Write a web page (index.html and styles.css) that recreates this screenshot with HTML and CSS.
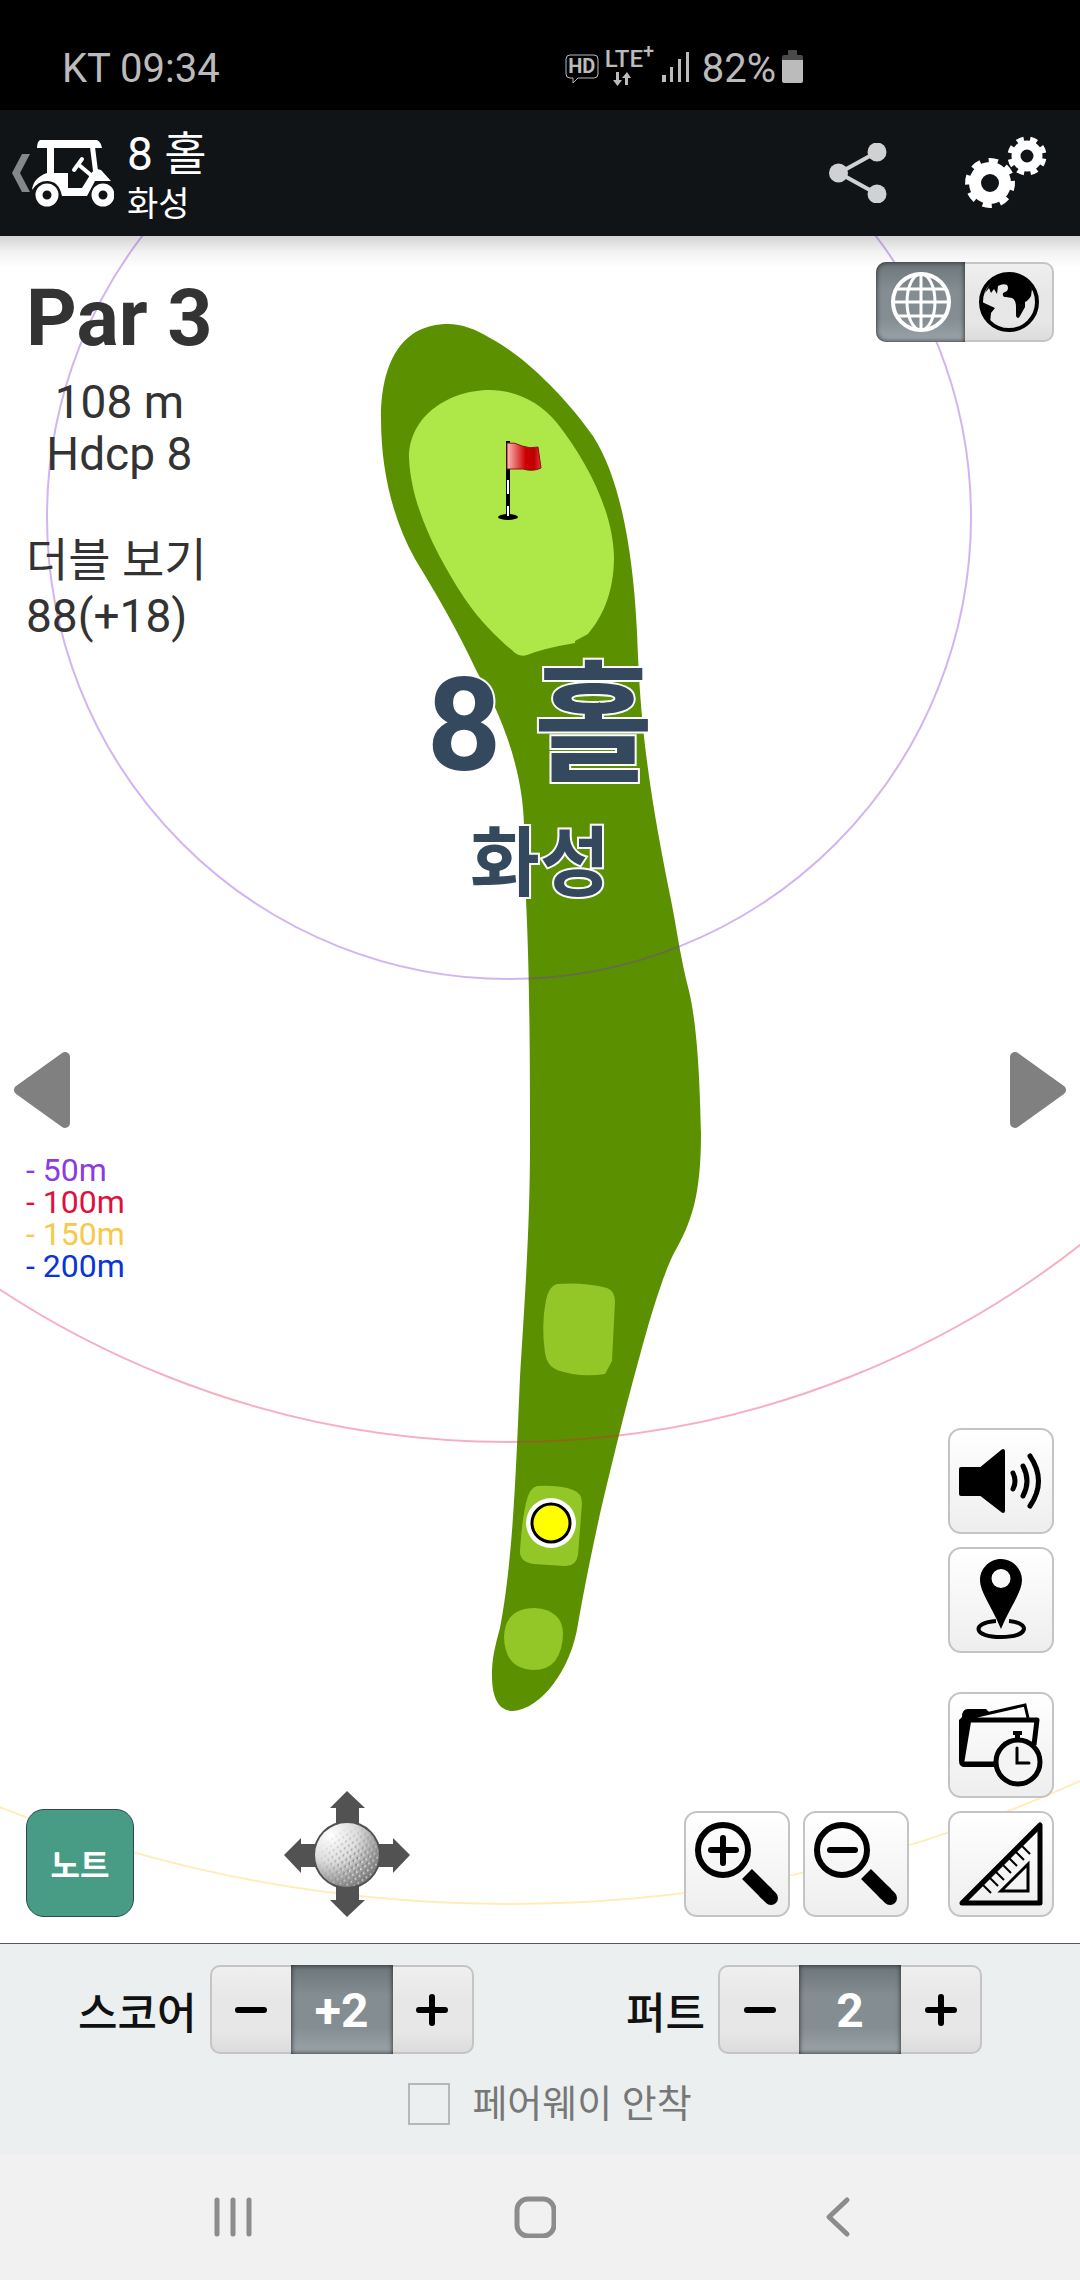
FILE: index.html
```html
<!DOCTYPE html>
<html lang="ko">
<head>
    <meta charset="UTF-8">
    <meta name="viewport" content="width=device-width">
    <title>8 홀 화성</title>
    <link rel="stylesheet" href="styles.css">
</head>

<body>

<div class="status">
  <span>KT 09:34</span>
  <div class="status-icons">
    <span class="hd">HD
      <svg class="hd-box" viewBox="0 0 34 30"><path d="M5 1H29Q33 1 33 5V20Q33 24 29 24H13L8 29V24H5Q1 24 1 20V5Q1 1 5 1Z"/></svg>
    </span>
    <span class="lte"><span>LTE<sup>+</sup></span>
      <svg width="20" height="14" viewBox="0 0 20 14"><path d="M4 0H7V8H10L5.500 14L1 8H4ZM13 13V6H10L15 0L19 6H16V13Z"/></svg>
    </span>
    <svg width="28" height="30" viewBox="0 0 28 30"><path d="M0 23h4v7H0zM8 15h3v15H8zM16 7h3v23h-3zM24 0h3v30h-3z"/></svg>
    <span class="percent">82%</span>
    <svg width="22" height="33" viewBox="0 0 22 33"><path fill="#4a4a4a" d="M6 1Q6 0 7 0H14Q15 0 15 1V5H19Q21 5 21 7V11H0V7Q0 5 2 5H6Z"/><path d="M0 10H21V31Q21 33 19 33H2Q0 33 0 31Z"/></svg>
  </div>
</div>

<header class="bar">
  <button class="back" aria-label="뒤로">
    <svg width="20" height="38" viewBox="0 0 20 38"><path fill="#85888b" d="M10 0H18L8 19L18 38H10L0 19Z"/></svg>
    <svg width="82" height="68" viewBox="0 0 82 68">
      <g fill="#fff">
        <path d="M8 1H65Q69 3 70 9H5Q5 3 8 1Z"/>
        <path d="M15 8H22V35H15ZM58 8H63L66 32H61Z"/>
        <path d="M0 51Q1 39 15 34H36V49H50L58 36Q60 32 65 30L69 31L79 42H63L55 57H30Q27 42 15 42Q6 42 0 51Z"/>
      </g>
      <path d="M50 20L42 31M47 26L60 37" stroke="#fff" stroke-width="4" stroke-linecap="round"/>
      <g fill="none" stroke="#fff" stroke-width="7"><circle cx="15" cy="56" r="8"/><circle cx="71" cy="56" r="8"/></g>
    </svg>
  </button>
  <h1 class="heading">8 홀<small>화성</small></h1>
  <button class="share" aria-label="공유">
    <svg width="58" height="60" viewBox="0 0 58 60"><path d="M48 9L10 30L48 51" fill="none" stroke="#d0d1d3" stroke-width="4"/><g fill="#d0d1d3"><circle cx="48" cy="9" r="9.500"/><circle cx="9.500" cy="30" r="9.500"/><circle cx="48" cy="51" r="9.500"/></g></svg>
  </button>
  <button class="gears" aria-label="설정">
    <svg width="84" height="74" viewBox="0 0 84 74">
      <g fill="none" stroke="#fff">
        <circle cx="26" cy="47" r="15" stroke-width="12"/>
        <circle cx="26" cy="47" r="22" stroke-width="6" stroke-dasharray="9 8.280" transform="rotate(-5 26 47)"/>
        <circle cx="63" cy="20" r="11" stroke-width="9"/>
        <circle cx="63" cy="20" r="17" stroke-width="5" stroke-dasharray="7 6.350" transform="rotate(9 63 20)"/>
      </g>
    </svg>
  </button>
</header>

<main class="map">
  <svg class="course" viewBox="0 236 1080 1707" preserveAspectRatio="xMidYMid slice">
    <path fill="#5b9100" d="M448 324C402 324 381 362 381 419C381 470 393 520 415 559C434 590 457 629 477 672C500 712 523 768 524 826C525 860 526 880 526 900C530 980 530 1080 530 1144C530 1230 524 1310 520 1377C516 1470 513 1560 500 1628C494 1650 492 1660 492 1676C492 1700 500 1711 513 1711C541 1709 571 1670 578 1624C584 1590 590 1560 598 1523C610 1470 628 1398 640 1355C650 1318 662 1278 673 1255C692 1222 701 1195 701 1133C700 1090 698 1025 688 987C681 960 676 925 671 900C655 820 642 750 638 656C636 590 628 490 593 436C570 403 528 358 490 338C475 329 462 324 448 324Z"/>
    <path fill="#aee848" d="M490 390C450 390 409 415 409 458C411 505 436 555 465 599C482 624 500 640 515 653Q520 657 527 655Q545 648 575 643L575 641L588 634C604 615 614 590 614 557C613 510 586 460 557 423C540 402 515 390 490 390Z"/>
    <path fill="#93c727" d="M557 1284Q585 1282 607 1288Q615 1291 615 1302L612 1361L605 1374Q580 1378 557 1370Q547 1366 545 1353Q541 1325 546 1300Q549 1286 557 1284Z"/>
    <path fill="#93c727" d="M537 1486Q560 1485 573 1490Q582 1493 582 1503L578 1555Q576 1567 564 1566L534 1564Q519 1562 520 1550Q522 1520 526 1503Q529 1488 537 1486Z"/>
    <path fill="#93c727" d="M504 1637Q505 1608 535 1608Q562 1610 563 1633Q563 1650 555 1661Q548 1670 533 1670Q505 1669 504 1637Z"/>
    <g fill="none" stroke-width="2" stroke-opacity=".35">
      <circle cx="509" cy="517" r="462" stroke="#7a2ad8"/>
      <circle cx="509" cy="517" r="925" stroke="#e6194b"/>
      <circle cx="509" cy="517" r="1387" stroke="#fc3"/>
    </g>
    <circle cx="551" cy="1523" r="25" fill="#fff"/>
    <circle cx="551" cy="1523" r="19" fill="#ff0" stroke="#000" stroke-width="3"/>
    <defs>
      <linearGradient id="red"><stop offset="0" stop-color="#fbb"/><stop offset=".55" stop-color="#c00"/><stop offset=".8" stop-color="#b00"/><stop offset="1" stop-color="#e33"/></linearGradient>
    </defs>
    <ellipse cx="508" cy="517" rx="10" ry="3"/>
    <path d="M508 441V517" stroke="#000" stroke-width="4"/>
    <path d="M508 480V494M508 506V516" stroke="#fff" stroke-width="2"/>
    <path fill="url(#red)" stroke="#811" d="M507 443Q515 442 522 446Q530 449 538 447L541 468Q533 472 523 469H507Z"/>
  </svg>

  <div class="info">
    <div class="par">
      <strong>Par 3</strong>
      <span>108 m</span>
      <span>Hdcp 8</span>
    </div>
    <p class="result">더블 보기<br>88(+18)</p>
  </div>

  <h2 class="hole">8 홀<small>화성</small></h2>

  <div class="views">
    <button class="dark" aria-label="지도">
      <svg width="62" height="62" viewBox="0 0 62 62" fill="none" stroke="#fff" stroke-width="2"><circle cx="31" cy="31" r="28" stroke-width="4"/><ellipse cx="31" cy="31" rx="14" ry="28" stroke-width="3"/><path stroke-width="3" d="M31 3V59M3 31H59M7 18H55M7 45H55"/></svg>
    </button>
    <button class="light" aria-label="위성">
      <svg width="62" height="62" viewBox="0 0 62 62"><circle cx="31" cy="31" r="28" fill="none" stroke="#000" stroke-width="4"/><path d="M7 22L11 17L13 22L16 18L19 23L20 15Q25 12 29 14Q31 17 29 20L25 22Q24 26 28 26L34 27Q38 29 38 36V45Q40 49 42 45L47 36V31Q50 30 53 25L54 18Q47 3 31 3Q14 4 7 22ZM4 31L17 37L13 42L12 52Q3 43 4 31Z"/></svg>
    </button>
  </div>

  <button class="prev" aria-label="이전 홀"><svg width="57" height="76" viewBox="0 0 57 76"><path d="M5 38L51 5V71Z"/></svg></button>
  <button class="next" aria-label="다음 홀"><svg width="57" height="76" viewBox="0 0 57 76"><path d="M52 38L6 5V71Z"/></svg></button>

  <div class="tools">
    <div class="side">
      <ul class="legend">
        <li class="m50">- 50m</li>
        <li class="m100">- 100m</li>
        <li class="m150">- 150m</li>
        <li class="m200">- 200m</li>
      </ul>
      <button class="note">노트</button>
    </div>
    <button class="move" aria-label="공 이동">
      <svg width="126" height="126" viewBox="0 0 126 126">
        <defs>
          <radialGradient id="ball" cx=".25" cy=".2" r=".9"><stop offset="0" stop-color="#fff"/><stop offset=".45" stop-color="#ddd"/><stop offset="1" stop-color="#777"/></radialGradient>
          <radialGradient id="fade" cx=".7" cy=".7" r=".7"><stop offset="0" stop-color="#fff"/><stop offset="1" stop-color="#000"/></radialGradient>
          <mask id="shade"><circle cx="63" cy="64" r="32" fill="url(#fade)"/></mask>
          <pattern id="dimples" width="5" height="5" patternUnits="userSpaceOnUse" patternTransform="rotate(-35)"><circle cx="2" cy="2" r="1.300" fill="#777"/><circle cx="3" cy="3" r="1" fill="#eee"/></pattern>
        </defs>
        <path fill="#525252" d="M63 0L81 17H75V40H52V17H46ZM63 126L81 109H75V88H52V109H46ZM0 64L17 47V53H40V76H17V82ZM126 64L109 47V53H88V76H109V82Z"/>
        <circle cx="63" cy="64" r="34" fill="#525252"/>
        <circle cx="63" cy="64" r="32" fill="url(#ball)"/>
        <circle cx="63" cy="64" r="32" fill="url(#dimples)" mask="url(#shade)"/>
      </svg>
    </button>
    <div class="zoom">
      <button class="tool" aria-label="확대">
        <svg viewBox="0 0 84 84" fill="none" stroke="#000" stroke-width="6"><circle cx="28" cy="28" r="25"/><path stroke-linecap="round" d="M16 28H41M28 16V41"/><path stroke-width="14" d="M52 52L72 72"/><path stroke-width="14" stroke-linecap="round" d="M70 70L76 76"/></svg>
      </button>
      <button class="tool" aria-label="축소">
        <svg viewBox="0 0 84 84" fill="none" stroke="#000" stroke-width="6"><circle cx="28" cy="28" r="25"/><path stroke-linecap="round" d="M16 28H41"/><path stroke-width="14" d="M52 52L72 72"/><path stroke-width="14" stroke-linecap="round" d="M70 70L76 76"/></svg>
      </button>
    </div>
    <div class="stack">
      <button class="tool" aria-label="소리">
        <svg viewBox="0 0 84 84"><path stroke="#000" stroke-width="4" stroke-linejoin="round" d="M2 30H22L44 12V72L22 55H2Z"/><path fill="none" stroke="#000" stroke-width="5" stroke-linecap="round" d="M54 34Q58 42 54 50M64 27Q72 42 64 57M71 17Q88 42 71 67"/></svg>
      </button>
      <button class="tool" aria-label="위치">
        <svg viewBox="0 0 84 84"><path fill="none" stroke="#000" stroke-width="4" d="M37 63C12 65 14 79 42 79C70 79 72 65 50 63"/><path fill-rule="evenodd" d="M42 1C54 1 63 11 63 22C63 34 51 49 42 71C33 49 21 34 21 22C21 11 30 1 42 1ZM42 11A9 9 0 1 0 42 30A9 9 0 1 0 42 11Z"/></svg>
      </button>
      <button class="tool gap" aria-label="기록">
        <svg viewBox="0 0 84 84"><path d="M0 17L3 14Q3 6 9 6H27L30 9L18 15H76V19H12L5 61H36V64H6Q0 64 0 58Z"/><g fill="none" stroke="#000"><path stroke-width="3" d="M18 13L66 2L69 15"/><path stroke-width="5" stroke-linejoin="round" d="M11 17H78L75 42M4 61H36"/></g><circle cx="59" cy="59" r="22" fill="#f4f4f4" stroke="#000" stroke-width="5"/><path d="M54 28H63V32H61V37H56V32H54Z"/><path fill="none" stroke="#000" stroke-width="3" stroke-linecap="round" d="M58 45V60H70"/></svg>
      </button>
      <button class="tool" aria-label="거리 측정">
        <svg viewBox="0 0 84 84" fill="none" stroke="#000"><path stroke-width="5" stroke-linejoin="round" d="M81 3V81H3Z"/><path stroke-width="3" d="M81 5L5 81"/><path stroke-width="3" d="M69 42V69H42Z"/><path stroke-width="2" d="M24 63l8 8M31 56l8 8M37 50l8 8M44 43l8 8M50 36l8 8M57 30l8 8M63 24l8 8"/></svg>
      </button>
    </div>
  </div>
</main>

<section class="score">
  <div class="counters">
    <div class="counter">
      <label for="score">스코어</label>
      <button class="light" aria-label="스코어 빼기"><svg width="32" height="32" viewBox="0 0 32 32"><path d="M3 16H29"/></svg></button>
      <output id="score" class="dark">+2</output>
      <button class="light" aria-label="스코어 더하기"><svg width="32" height="32" viewBox="0 0 32 32"><path d="M3 16H29M16 3V29"/></svg></button>
    </div>
    <div class="counter">
      <label for="putt">퍼트</label>
      <button class="light" aria-label="퍼트 빼기"><svg width="32" height="32" viewBox="0 0 32 32"><path d="M3 16H29"/></svg></button>
      <output id="putt" class="dark">2</output>
      <button class="light" aria-label="퍼트 더하기"><svg width="32" height="32" viewBox="0 0 32 32"><path d="M3 16H29M16 3V29"/></svg></button>
    </div>
  </div>
  <div class="fairway">
    <input type="checkbox" id="fairway">
    <label for="fairway">페어웨이 안착</label>
  </div>
</section>

<nav class="keys">
  <button aria-label="최근 앱"><svg width="42" height="42" viewBox="0 0 42 42"><path d="M5 4V38M21 4V38M37 4V38"/></svg></button>
  <button aria-label="홈"><svg width="42" height="42" viewBox="0 0 42 42"><rect x="3" y="3" width="37" height="37" rx="11"/></svg></button>
  <button aria-label="뒤로 가기"><svg width="42" height="42" viewBox="0 0 42 42"><path d="M31 4L13 21L31 38"/></svg></button>
</nav>

</body>
</html>
```
FILE: styles.css
```css
* {
    box-sizing: border-box;
}
body {
    display: flex;
    flex-direction: column;
    min-height: 100vh;
    margin: 0;
    background: #fff;
    color: #333;
    font-family: Roboto, "Noto Sans CJK KR", sans-serif;
}
button {
    display: flex;
    align-items: center;
    justify-content: center;
    margin: 0;
    padding: 0;
    border: 0;
    background: none;
    font: inherit;
    cursor: pointer;
}
svg {
    display: block;
}

/* phone status bar */
.status {
    display: flex;
    justify-content: space-between;
    height: 110px;
    padding: 46px 276px 0 62px;
    background: #000;
    color: #bbb;
    fill: #bbb;
    font-size: 40px;
    line-height: 46px;
}
.status-icons {
    display: flex;
    gap: 6px;
}
.status-icons > svg {
    margin-top: 6px;
}
.hd {
    position: relative;
    width: 34px;
    height: 30px;
    margin-top: 8px;
    font-size: 20px;
    font-weight: 700;
    line-height: 25px;
    text-align: center;
}
.hd-box {
    position: absolute;
    inset: 0;
    fill: none;
    stroke: #bbb;
}
.lte {
    width: 51px;
    font-size: 24px;
    font-weight: 500;
    line-height: 26px;
    white-space: nowrap;
}
.lte svg {
    margin-left: 7px;
}
.lte sup {
    font-size: 20px;
    line-height: 0;
}
.percent {
    margin-left: 6px;
}
.status-icons > svg:last-child {
    margin-top: 4px;
}

/* title bar */
.bar {
    display: flex;
    align-items: center;
    height: 126px;
    padding: 0 32px 0 12px;
    background: #101417;
    color: #fff;
}
.heading {
    flex: 1;
    margin: 0 0 0 13px;
    font-size: 46px;
    font-weight: 400;
    line-height: 62px;
}
.heading small {
    display: block;
    font-size: 34px;
    line-height: 38px;
}
.share {
    margin-right: 77px;
}

/* hole map */
.map {
    position: relative;
    flex: 1;
    display: grid;
    grid-template-columns: 1fr 1fr;
    grid-template-rows: 1fr auto 1fr;
    padding: 26px;
    background: linear-gradient(#d4d4d4, #f2f2f2 16px, #fff 32px);
}
.course {
    position: absolute;
    inset: 0;
    width: 100%;
    height: 100%;
}
.info, .views, .hole, .prev, .next, .tools {
    position: relative;
}
.info {
    grid-area: 1 / 1;
    justify-self: start;
    font-size: 46px;
    line-height: 52px;
}
.par {
    display: flex;
    flex-direction: column;
    align-items: center;
}
.par strong {
    margin-bottom: 2px;
    font-size: 79px;
    line-height: 112px;
}
.result {
    margin: 52px 0 0;
    line-height: 56px;
}
.hole {
    grid-area: 1 / 1 / 2 / 3;
    margin: 384px 0 0;
    color: #35495e;
    font-size: 130px;
    line-height: 160px;
    text-align: center;
    -webkit-text-stroke: 4px #fff;
    paint-order: stroke;
}
.hole small {
    display: block;
    font-size: 76px;
    line-height: 116px;
}
.views {
    grid-area: 1 / 2;
    justify-self: end;
    align-self: start;
    display: flex;
}
.views button {
    width: 89px;
    height: 80px;
}
.light {
    border: 2px solid #c4c4c4;
    background: linear-gradient(#efefef, #e7e7e7 40%, #e7e7e7 75%, #dcdcdc);
}
.dark {
    background: linear-gradient(#6b757a, #848d92 35%, #848d92 70%, #9ba4aa);
    box-shadow: inset 0 0 5px #222;
    color: #fff;
}
.views .dark {
    border-radius: 10px 0 0 10px;
}
.views .light {
    border-left: 0;
    border-radius: 0 10px 10px 0;
}
.prev, .next {
    grid-area: 2 / 1;
    justify-self: start;
    margin: 0 -12px;
    fill: #808080;
    stroke: #808080;
    stroke-width: 10px;
    stroke-linejoin: round;
}
.next {
    grid-area: 2 / 2;
    justify-self: end;
}
.tools {
    grid-area: 3 / 1 / 4 / 3;
    display: flex;
    align-items: flex-end;
}
.side {
    align-self: stretch;
    display: flex;
    flex-direction: column;
    justify-content: space-between;
    width: 108px;
    margin-right: 150px;
}
.legend {
    margin: 26px 0 0;
    padding: 0;
    list-style: none;
    font-size: 32px;
    line-height: 32px;
}
.m50 {
    color: #8e3bdd;
}
.m100 {
    color: #e0103c;
}
.m150 {
    color: #f7c948;
}
.m200 {
    color: #0a35d6;
}
.note {
    width: 108px;
    height: 108px;
    border: 1px solid #2c4a50;
    border-radius: 18px;
    background: #489b85;
    color: #fff;
    font-size: 32px;
    font-weight: 700;
}
.zoom {
    display: flex;
    gap: 13px;
    margin: 0 39px 0 auto;
}
.stack {
    display: flex;
    flex-direction: column;
    gap: 13px;
}
.tool {
    width: 106px;
    height: 106px;
    border: 2px solid #c4c4c4;
    border-radius: 13px;
    background: linear-gradient(#fff, #eee);
}
.tool svg {
    width: 84px;
    height: 84px;
}
.gap {
    margin-top: 26px;
}

/* score entry */
.score {
    padding: 21px 0 22px;
    border-top: 1px solid #555;
    background: #ebeff0;
}
.counters {
    display: flex;
    justify-content: space-between;
    padding: 0 98px 0 78px;
}
.counter {
    display: flex;
    align-items: center;
    color: #111;
}
.counter label {
    margin-right: 13px;
    font-size: 43px;
    font-weight: 500;
}
.counter button {
    width: 81px;
    height: 89px;
    border-right: 0;
    border-radius: 10px 0 0 10px;
    stroke: #000;
    stroke-width: 6px;
    stroke-linecap: round;
}
.counter output + button {
    border-right: 2px solid #c4c4c4;
    border-left: 0;
    border-radius: 0 10px 10px 0;
}
.counter output {
    width: 102px;
    height: 89px;
    color: #fff;
    font-size: 48px;
    font-weight: 700;
    line-height: 92px;
    text-align: center;
}
.fairway {
    display: flex;
    align-items: center;
    justify-content: center;
    gap: 22px;
    padding: 22px 0 0 20px;
    color: #777;
    font-size: 38px;
    line-height: 56px;
}
.fairway input {
    appearance: none;
    width: 42px;
    height: 42px;
    margin: 0;
    border: 2px solid #b4b8b9;
}

/* phone navigation keys */
.keys {
    display: grid;
    grid-template-columns: 1fr 1fr 1fr;
    height: 126px;
    padding: 0 92px 0 82px;
    background: #f1f1f1;
    fill: none;
    stroke: #8c8c8c;
    stroke-width: 5px;
    stroke-linecap: round;
    stroke-linejoin: round;
}
```
